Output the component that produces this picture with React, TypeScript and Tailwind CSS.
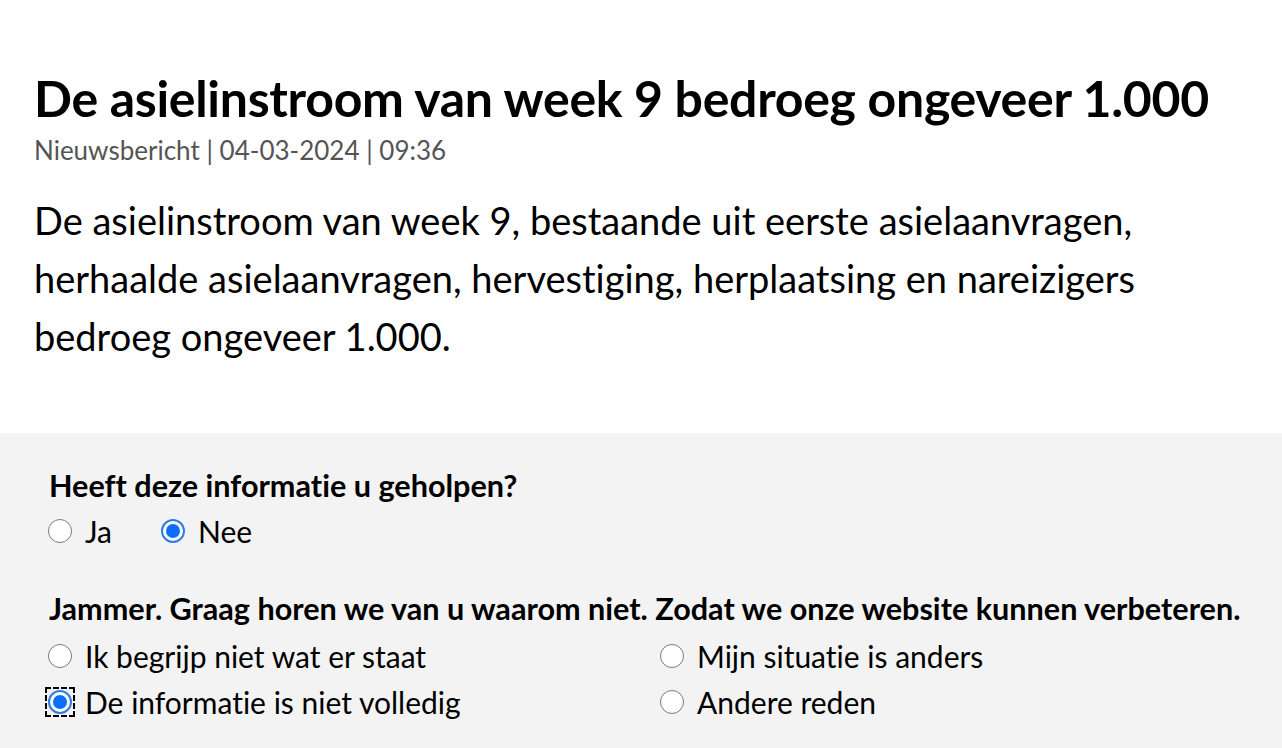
import React from "react";

const font = { fontFamily: "Lato, 'Noto Sans', sans-serif" };

function Radio({ checked, focused }: { checked?: boolean; focused?: boolean }) {
  const dot = checked ? (
    <span className="flex h-[24px] w-[24px] items-center justify-center rounded-full border-2 border-[#2f7be6] bg-white">
      <span className="h-[14px] w-[14px] rounded-full bg-[#0b6ffb]" />
    </span>
  ) : (
    <span className="h-[24px] w-[24px] rounded-full border border-[#7a7a7a] bg-white" />
  );
  if (focused) {
    return (
      <span className="flex h-[30px] w-[30px] shrink-0 items-center justify-center outline-2 outline-dashed outline-black -outline-offset-2">
        {dot}
      </span>
    );
  }
  return <span className="flex h-[30px] w-[30px] shrink-0 items-center justify-center">{dot}</span>;
}

function Option({ label, checked, focused }: { label: string; checked?: boolean; focused?: boolean }) {
  return (
    <label className="flex items-center gap-[10px] text-[30px] leading-[46px] text-black">
      <Radio checked={checked} focused={focused} />
      <span>{label}</span>
    </label>
  );
}

export default function App() {
  return (
    <div className="min-h-[748px] bg-white [font-variant-ligatures:none]" style={font}>
      <div className="px-[34px] pt-[68px] pb-[68px]">
        <h1 className="text-[50px] font-bold leading-[60px] tracking-[-0.3px] text-black">
          De asielinstroom van week 9 bedroeg ongeveer 1.000
        </h1>
        <p className="mt-[7px] text-[26px] leading-[30px] text-[#555555]">
          Nieuwsbericht | 04-03-2024 | 09:36
        </p>
        <p className="mt-[26px] text-[38px] leading-[58px] text-black">
          De asielinstroom van week 9, bestaande uit eerste asielaanvragen,
          <br />
          herhaalde asielaanvragen, hervestiging, herplaatsing en nareizigers
          <br />
          bedroeg ongeveer 1.000.
        </p>
      </div>
      <div className="min-h-[315px] bg-[#f3f3f3] pl-[45px] pt-[33px]">
        <p className="pl-[4px] text-[30.6px] font-bold leading-[40px] text-black">Heeft deze informatie u geholpen?</p>
        <div className="mt-[2px] flex gap-[46px]">
          <Option label="Ja" />
          <Option label="Nee" checked />
        </div>
        <p className="mt-[35px] pl-[4px] text-[30.6px] font-bold leading-[40px] text-black">
          Jammer. Graag horen we van u waarom niet. Zodat we onze website kunnen verbeteren.
        </p>
        <div className="mt-[4px] grid w-[1224px] grid-cols-2">
          <Option label="Ik begrijp niet wat er staat" />
          <Option label="Mijn situatie is anders" />
          <Option label="De informatie is niet volledig" checked focused />
          <Option label="Andere reden" />
        </div>
      </div>
    </div>
  );
}
